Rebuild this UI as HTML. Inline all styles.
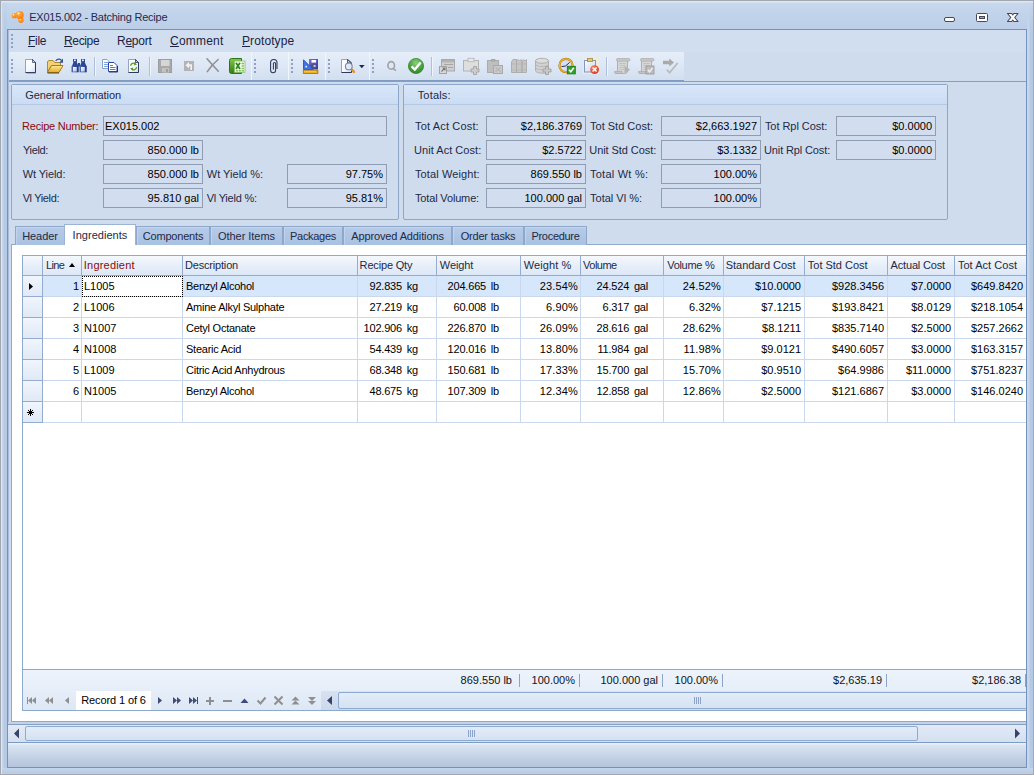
<!DOCTYPE html>
<html>
<head>
<meta charset="utf-8">
<title>EX015.002 - Batching Recipe</title>
<style>
*{box-sizing:border-box;margin:0;padding:0}
html,body{width:1034px;height:775px;overflow:hidden;background:#bfd2ea}
body{font-family:"Liberation Sans",sans-serif;font-size:11px;color:#10131a;position:relative;letter-spacing:-0.15px}
.a{position:absolute}
.t{position:absolute;white-space:nowrap;line-height:14px}
svg{display:block;overflow:visible}
/* window frame */
#frame{left:0;top:0;width:1034px;height:775px;background:linear-gradient(#dde8f5 0,#dde8f5 1px,#c7d8ed 2px,#c1d3ea 14px,#bccfe8 28px,#bccfe8 100%);border:1px solid #a3a8b0}
#frameL{left:1px;top:1px;width:6px;height:773px;background:linear-gradient(90deg,#dbe6f4 0,#dbe6f4 1px,#c4d5ec 1px,#c4d5ec 2px,#b6cae5 3px,#b6cae5 100%);-webkit-mask-image:linear-gradient(180deg,transparent 0,rgba(0,0,0,.35) 14px,#000 34px);mask-image:linear-gradient(180deg,transparent 0,rgba(0,0,0,.35) 14px,#000 34px)}
#frameR{left:1027px;top:1px;width:6px;height:773px;background:linear-gradient(90deg,#c6d7ec 0,#c6d7ec 2px,#b5c9e4 3px,#b5c9e4 100%);-webkit-mask-image:linear-gradient(180deg,transparent 0,rgba(0,0,0,.35) 14px,#000 34px);mask-image:linear-gradient(180deg,transparent 0,rgba(0,0,0,.35) 14px,#000 34px)}
#frameB{left:1px;top:768px;width:1032px;height:6px;background:linear-gradient(#c3d5eb,#b7cbe6)}
#frameL2{left:1px;top:1px;width:1px;height:773px;background:#dbe6f4}
#client{left:7px;top:29px;width:1020px;height:739px;background:#cfdcee;border:1px solid #7592bd}
#title{left:29.2px;top:10px;font-size:11px;letter-spacing:-0.23px;color:#1f2a52}
/* menu */
#menubar{left:8px;top:30px;width:1018px;height:22px;background:#d0def0}
.m{top:34px;font-size:12px;letter-spacing:-0.35px;color:#1d2340}
.m u{text-decoration:underline;text-underline-offset:1px}
/* toolbar */
#toolbar{left:8px;top:52px;width:676px;height:28px;background:linear-gradient(#e6eef9,#dde7f5 50%,#d2dff0)}
#tbline{left:8px;top:80px;width:676px;height:2px;background:linear-gradient(#7f9ac1,#8aa3c8)}
#tbline2{left:684px;top:81px;width:342px;height:1px;background:#859ec5}
#cl2{left:8px;top:30px;width:1px;height:737px;background:#a9bdda}
.grip{width:2px;background-image:repeating-linear-gradient(#8ea2c2 0 2px,transparent 2px 4px)}
.tsep{position:absolute;top:57px;width:2px;height:19px;border-left:1px solid #afc0db;border-right:1px solid #f0f5fc}
/* panels */
.panel{border:1px solid #8da6ca;background:#cfdcee;border-radius:2px}
.phead{left:0;top:0;right:0;height:20px;background:linear-gradient(#d9e6f8,#cadcf4);border-bottom:1px solid #b4c8e3}
.lbl{color:#1e2a44}
.red{color:#8b0a0a}
.fld{position:absolute;height:20px;border:1px solid #8e9cb4;background:#d2deef;line-height:19px;white-space:nowrap;padding:0 3px 0 1px;color:#000;letter-spacing:0}
.r{text-align:right}
/* tabs */
.tab{letter-spacing:0.03px;position:absolute;top:226px;height:19px;border:1px solid #8ea8cc;border-bottom:none;background:linear-gradient(#b7cbe8,#a9c1e1);box-shadow:inset 1px 1px 0 rgba(255,255,255,.22);text-align:center;line-height:18px;color:#1e2a44;white-space:nowrap}
.tab.sel{top:224px;height:21px;background:#fff;box-shadow:none;border-color:#9bb3d4;line-height:20px;z-index:3}
#page{left:11px;top:244px;width:1015px;height:478px;background:#fff;border:1px solid #8fa9cc;border-right:none}
/* grid */
#grid{left:22px;top:255px;width:1004px;height:456px;border:1px solid #8fa9cc;border-right:none;background:#fff;overflow:hidden}
.gh{position:absolute;top:0;height:20px;background:linear-gradient(#f5f8fd,#e6eef9 55%,#dde8f6);border-right:1px solid #93acd0;border-bottom:1px solid #93acd0;line-height:18px;padding-left:3px;white-space:nowrap;color:#1e2a44;overflow:hidden}
.row{position:absolute;left:0;width:1004px;height:21px}
.c.d{letter-spacing:-0.25px;padding-left:3px}
.c.u{letter-spacing:-0.2px;word-spacing:2px}
.c.p{letter-spacing:0.15px}
.c{position:absolute;top:0;height:21px;border-right:1px solid #c9d8ec;border-bottom:1px solid #c9d8ec;line-height:20px;padding:0 2px;white-space:nowrap;overflow:hidden;letter-spacing:0;color:#000}
.ind{position:absolute;left:0;top:0;height:21px;background:linear-gradient(#f1f5fc,#e0e9f6);border-right:1px solid #93acd0;border-bottom:1px solid #93acd0}
.selrow .c{background:#d6e6fb}
#gfoot{left:0;top:413px;width:1004px;height:42px;border-top:1px solid #8fa9cc;background:linear-gradient(#edf3fb,#e6eef9 50%,#dde7f5)}
.sum{position:absolute;top:418px;height:13px;border-right:1px solid #8ea4c4;text-align:right;padding-right:7px;line-height:13px;white-space:nowrap;letter-spacing:0;color:#10131a}
.focus{background:#fff !important;outline:1px dotted #000;outline-offset:-1px}
.sortup{display:inline-block;width:0;height:0;border-left:3.5px solid transparent;border-right:3.5px solid transparent;border-bottom:4px solid #000;margin-left:5px;vertical-align:2px}
/* nav */
#recbox{position:absolute;background:#fff;text-align:center;line-height:19px;letter-spacing:-0.1px;color:#000}
/* scrollbars */
.thumb{position:absolute;border:1px solid #8faad0;border-radius:2px;background:linear-gradient(#e3ecf8,#d5e2f3)}
</style>
</head>
<body>
<div id="frame" class="a"></div>
<div id="frameL" class="a"></div>
<div id="frameR" class="a"></div>
<div id="frameB" class="a"></div>
<div id="frameL2" class="a"></div>
<div id="title" class="t">EX015.002 - Batching Recipe</div>
<svg class="a" style="left:940px;top:8px" width="86" height="20"><rect x="4.5" y="9.5" width="10" height="4" rx="1.5" fill="#fff" stroke="#45475c"/><rect x="36.5" y="5.5" width="11" height="8" rx="1" fill="#fff" stroke="#45475c"/><rect x="39.5" y="8.5" width="5" height="2" fill="#8fa3c4" stroke="#45475c"/><path d="M67.5 5.5h4.2l1.05 1.5l1.05-1.5h4.2l-3.3 4l3.3 4h-4.2l-1.05-1.5l-1.05 1.5h-4.2l3.3-4z" fill="#fff" stroke="#45475c" stroke-width="1.1" stroke-linejoin="round"/></svg>
<div id="client" class="a"></div>
<div id="menubar" class="a"></div>
<div class="a grip" style="left:11px;top:34px;height:15px"></div>
<div class="t m" style="left:28px;letter-spacing:-0.30px"><u>F</u>ile</div>
<div class="t m" style="left:64px;letter-spacing:-0.35px"><u>R</u>ecipe</div>
<div class="t m" style="left:117px;letter-spacing:-0.25px">R<u>e</u>port</div>
<div class="t m" style="left:170px;letter-spacing:0.20px"><u>C</u>omment</div>
<div class="t m" style="left:242px;letter-spacing:0.10px"><u>P</u>rototype</div>
<div id="toolbar" class="a"></div>
<div id="tbline" class="a"></div><div id="tbline2" class="a"></div><div id="cl2" class="a"></div>
<div class="a grip" style="left:11px;top:59px;height:15px"></div>
<div class="a" style="left:251px;top:52px;width:1px;height:28px;background:#f1f5fc"></div>
<div class="a" style="left:288px;top:52px;width:1px;height:28px;background:#f1f5fc"></div>
<div class="a" style="left:325px;top:52px;width:1px;height:28px;background:#f1f5fc"></div>
<div class="a" style="left:369px;top:52px;width:1px;height:28px;background:#f1f5fc"></div>
<div class="a grip" style="left:254px;top:59px;height:15px"></div>
<div class="a grip" style="left:291px;top:59px;height:15px"></div>
<div class="a grip" style="left:328px;top:59px;height:15px"></div>
<div class="a grip" style="left:372px;top:59px;height:15px"></div>
<div class="tsep" style="left:94px"></div>
<div class="tsep" style="left:149px"></div>
<div class="tsep" style="left:431px"></div>
<div class="tsep" style="left:606px"></div>
<svg class="a" style="left:8px;top:6px" width="676" height="74" viewBox="8 6 676 74">
<defs>
<radialGradient id="og" cx="35%" cy="30%" r="75%"><stop offset="0" stop-color="#fff3d8"/><stop offset="0.3" stop-color="#ffa53a"/><stop offset="1" stop-color="#f97800"/></radialGradient>
<linearGradient id="pg" x1="0" y1="0" x2="1" y2="1"><stop offset="0" stop-color="#ffffff"/><stop offset="0.6" stop-color="#f4f7fc"/><stop offset="1" stop-color="#cfd9ec"/></linearGradient>
<linearGradient id="fg" x1="0" y1="0" x2="0" y2="1"><stop offset="0" stop-color="#fde894"/><stop offset="1" stop-color="#eaa92a"/></linearGradient>
<linearGradient id="bn" x1="0" y1="0" x2="1" y2="0"><stop offset="0" stop-color="#4a6cc0"/><stop offset="1" stop-color="#1e3478"/></linearGradient>
<linearGradient id="ln" x1="0" y1="0" x2="1" y2="1"><stop offset="0" stop-color="#ffffff"/><stop offset="1" stop-color="#a9bbe8"/></linearGradient>
<linearGradient id="xg" x1="0" y1="0" x2="0" y2="1"><stop offset="0" stop-color="#86c74c"/><stop offset="1" stop-color="#2f7d12"/></linearGradient>
<radialGradient id="gc" cx="50%" cy="30%" r="75%"><stop offset="0" stop-color="#8fd07e"/><stop offset="0.6" stop-color="#47a03c"/><stop offset="1" stop-color="#2a7d27"/></radialGradient>
<linearGradient id="fl" x1="0" y1="0" x2="1" y2="1"><stop offset="0" stop-color="#7a6fd6"/><stop offset="1" stop-color="#3a3690"/></linearGradient>
<radialGradient id="rc" cx="40%" cy="35%" r="70%"><stop offset="0" stop-color="#ff8a6a"/><stop offset="1" stop-color="#d9301a"/></radialGradient>
<linearGradient id="cb" x1="0" y1="0" x2="1" y2="1"><stop offset="0" stop-color="#ffffff"/><stop offset="1" stop-color="#c3d3ef"/></linearGradient>
</defs>
<!-- title icon -->
<circle cx="14.3" cy="15.7" r="2.6" fill="url(#og)"/><circle cx="20.9" cy="20.1" r="2.8" fill="url(#og)"/><circle cx="19.7" cy="14.9" r="4" fill="url(#og)"/>
<!-- 1 new -->
<path d="M25.5 59.5H32.5L35.5 62.5V72.5H25.5Z" fill="url(#pg)" stroke="#97a4bf"/><path d="M32.5 59.5L35.5 62.5V72.5H25.5" fill="none" stroke="#2c3a5e" stroke-width="1"/><path d="M32.5 59.5V62.5H35.5Z" fill="#d3dbea" stroke="#2c3a5e" stroke-width="0.7"/><path d="M26.5 73.3H36" stroke="#6b7898" stroke-width="0.6"/>
<!-- 2 open -->
<path d="M47.5 72.5V61.5L49 60.5H53L54.5 62.5H60.5V66H51Z" fill="#f1d276" stroke="#b08a34"/><path d="M47.5 72.5L51.5 65.5H63L59 72.5Z" fill="url(#fg)" stroke="#a67c22"/><path d="M47.5 73H59" stroke="#5a4a20" stroke-width="1"/>
<path d="M55.6 61Q58.6 57.6 61.6 60.4" fill="none" stroke="#36508e" stroke-width="1.1"/><path d="M63 58.6V62.8H59.2Z" fill="#36508e"/>
<!-- 3 binoculars -->
<g><rect x="73" y="59" width="4" height="3.2" fill="#2f4fa2"/><rect x="74" y="59.5" width="1.8" height="1.6" fill="#e3ebfb"/><path d="M72 66L73.6 62H76.6L78.5 66Z" fill="#2b4896"/><rect x="71.5" y="66" width="7.2" height="6.3" fill="url(#bn)"/><rect x="73" y="67" width="3.8" height="4.6" fill="url(#ln)"/></g>
<g transform="translate(8,0)"><rect x="73" y="59" width="4" height="3.2" fill="#2f4fa2"/><rect x="74" y="59.5" width="1.8" height="1.6" fill="#e3ebfb"/><path d="M72 66L73.6 62H76.6L78.5 66Z" fill="#2b4896"/><rect x="71.5" y="66" width="7.2" height="6.3" fill="url(#bn)"/><rect x="73" y="67" width="3.8" height="4.6" fill="url(#ln)"/></g><rect x="78" y="63" width="2" height="3.5" fill="#2b4896"/>
<!-- 4 copy -->
<path d="M102.5 59.5H107L109.5 62V68.5H102.5Z" fill="#fff" stroke="#8fa1c6"/><path d="M104 62.5H108M104 64.5H108M104 66.5H108" stroke="#6c9ce2" stroke-width="0.9"/>
<path d="M108.5 62.5H114L117 65.5V71.5H108.5Z" fill="#fff" stroke="#2b47a0"/><path d="M110 65.5H113M110 67.5H115.5M110 69.5H115.5" stroke="#4a80d8"/><path d="M109 72H117.5V66" fill="none" stroke="#1f3788"/>
<!-- 5 refresh doc -->
<path d="M128.5 59.5H135.5L138.5 62.5V72.5H128.5Z" fill="url(#pg)" stroke="#97a4bf"/><path d="M135.5 59.5L138.5 62.5V72.5H128.5" fill="none" stroke="#2c3a5e"/><path d="M135.5 59.5V62.5H138.5Z" fill="#c5cfe3" stroke="#2c3a5e" stroke-width="0.8"/>
<path d="M130.6 65.8A3 3 0 0 1 135.6 64" fill="none" stroke="#5a9c1c" stroke-width="1.2"/><path d="M134.6 62.2L137 64.6L134 65.6Z" fill="#5a9c1c"/>
<path d="M136.6 67.2A3 3 0 0 1 131.6 69" fill="none" stroke="#5a9c1c" stroke-width="1.2"/><path d="M132.6 70.8L130.2 68.4L133.2 67.4Z" fill="#5a9c1c"/>
<!-- 6 save gray -->
<rect x="158.5" y="59.5" width="13" height="13" fill="#a9a9a9" stroke="#9d9d9d"/><rect x="161" y="60" width="8.5" height="6" fill="#d6d6d6"/><rect x="162" y="68" width="7" height="4.5" fill="#c2c2c2"/><rect x="166" y="69" width="2" height="3" fill="#a0a0a0"/>
<!-- 7 undo gray -->
<rect x="184" y="61" width="10" height="10" fill="#b3b3b3"/><path d="M185.5 65.2L189 62V64.2H192V70H190.4V66.2H189V68.4Z" fill="#f2f2f2"/>
<!-- 8 X gray -->
<path d="M207 58.8Q212 64.5 218.3 71.3M218.2 59.5Q212 64.5 207.3 71.6" fill="none" stroke="#8f8f8f" stroke-width="1.5" stroke-linecap="round"/>
<!-- 9 excel -->
<path d="M229.5 60.5Q229.5 58.5 231.5 58.5H241.5V73.5H231.5Q229.5 73.5 229.5 71.5Z" fill="url(#xg)" stroke="#2f7414"/>
<rect x="234.5" y="61" width="10.5" height="11.3" fill="#f2f9ec" stroke="#86bf68" stroke-width="0.8"/>
<path d="M236 62.8L240 69M240 62.8L236 69" stroke="#2e8818" stroke-width="1.7"/><path d="M241.6 63.5h2.4M241.6 66h2.4M241.6 68.5h2.4M236 70.8h2M238.8 70.8h2M241.6 70.8h2.4" stroke="#86c462" stroke-width="1.4"/>
<!-- 10 paperclip -->
<path d="M277 69V62.6A3.2 3.2 0 0 0 270.6 62.6V70.3A2.5 2.5 0 0 0 275.6 70.3V63.6A1.1 1.1 0 0 0 273.4 63.6V69.4" fill="none" stroke="#2b3a5c" stroke-width="1.05"/>
<!-- 11 save ruler -->
<rect x="309" y="59" width="9" height="10.5" fill="url(#fl)"/><rect x="311.5" y="60" width="4.6" height="2.6" fill="#fff"/><rect x="311" y="64.5" width="5.2" height="3.2" fill="#4d5470"/><rect x="313.6" y="65" width="2" height="2" fill="#c6cadc"/>
<path d="M303.5 59.8L313.2 69.5H303.5Z" fill="#3f74e8" stroke="#2a50ba" stroke-width="0.9"/><circle cx="306.2" cy="66.6" r="0.9" fill="#eaf1ff"/>
<rect x="303.3" y="70.3" width="14.6" height="3.2" fill="#eaab16" stroke="#a57206" stroke-width="0.8"/><path d="M305 70.6v1.6M307 70.6v1.6M309 70.6v1.6M311 70.6v1.6M313 70.6v1.6M315 70.6v1.6" stroke="#fff1b8" stroke-width="0.7"/>
<!-- 12 preview -->
<path d="M341.5 59.5H347.5L351.5 63V72.5H341.5Z" fill="url(#pg)" stroke="#97a4bf"/><path d="M347.5 59.5L351.5 63V72.5H341.5" fill="none" stroke="#2c3a5e"/><path d="M347.5 59.5V63H351.5Z" fill="#c5cfe3" stroke="#2c3a5e" stroke-width="0.8"/>
<path d="M351.3 69L354 71.8" stroke="#e8921a" stroke-width="2.4" stroke-linecap="round"/><circle cx="348.8" cy="66.4" r="3.4" fill="#dbe7fa" fill-opacity="0.95" stroke="#7f8798" stroke-width="1.1"/>
<path d="M359 65H364.6L361.8 68.2Z" fill="#1f2a4a"/>
<!-- 13 Q -->
<ellipse cx="391.2" cy="65.4" rx="3.3" ry="3.8" fill="none" stroke="#a0a0a0" stroke-width="1.6"/><path d="M392.6 68.2L396 70.6" stroke="#a0a0a0" stroke-width="1.6"/>
<!-- 14 green check -->
<circle cx="416" cy="66" r="7.6" fill="url(#gc)" stroke="#3a8c30" stroke-width="0.8"/><path d="M411.6 66.4L414.8 69.6L420.6 62.6" fill="none" stroke="#fff" stroke-width="2.3"/>
<!-- 15 form shortcut gray -->
<rect x="441.5" y="59.5" width="13" height="11.5" fill="#cfcfcf" stroke="#a9a9a9"/><rect x="442" y="60" width="12" height="2.4" fill="#b3b3b3"/><path d="M444 64.5H453M448 67.5H453" stroke="#a6a6a6" stroke-width="1.2"/>
<rect x="439.5" y="66.5" width="7" height="7" fill="#d8d8d8" stroke="#a2a2a2"/><path d="M441.5 71.5L444.8 68.2M442.4 68H445V70.6" fill="none" stroke="#767676" stroke-width="1.1"/>
<!-- 16 clipboard plus gray -->
<rect x="463.5" y="60.5" width="15" height="10.5" fill="#dedede" stroke="#b4b4b4"/><rect x="468" y="58.3" width="6" height="3.4" fill="#e9e9e9" stroke="#b4b4b4" stroke-width="0.8"/>
<path d="M473.5 66.5h3v2.5h2.5v3h-2.5v2.5h-3v-2.5h-2.5v-3h2.5z" fill="#cdcdcd" stroke="#a4a4a4" stroke-width="0.9"/>
<!-- 17 paste gray -->
<rect x="487.5" y="60.5" width="11" height="12" fill="#bebebe" stroke="#ababab"/><rect x="491" y="59" width="4.4" height="2.6" fill="#a9a9a9"/><rect x="493.5" y="65.5" width="9" height="8" fill="#c9c9c9" stroke="#a8a8a8"/><path d="M495.5 67.5L500.5 71.5M500.5 67.5L495.5 71.5" stroke="#b5b5b5" stroke-width="1.2"/>
<!-- 18 books gray -->
<path d="M511.5 62L513 59.5H516.5V72.5H511.5Z M516.5 61.5L518 59.5L519.5 61L521 59.5L522 61.5V72.5H516.5Z M522 61.5L523.5 59.5L525 61L526.5 59.5V72.5H522Z" fill="#c6c6c6" stroke="#aaaaaa" stroke-width="0.9"/><path d="M512 64H526M512 70H526" stroke="#b4b4b4" stroke-width="0.8"/>
<!-- 19 db plus gray -->
<path d="M535.5 60.8V70.6A6.5 2.6 0 0 0 548.5 70.6V60.8" fill="#d2d2d2" stroke="#b0b0b0"/><ellipse cx="542" cy="60.8" rx="6.5" ry="2.5" fill="#dcdcdc" stroke="#b0b0b0"/><path d="M535.5 64.2A6.5 2.4 0 0 0 548.5 64.2M535.5 67.4A6.5 2.4 0 0 0 548.5 67.4" fill="none" stroke="#b8b8b8"/>
<path d="M545.5 66.5h3v2.5h2.5v3h-2.5v2.5h-3v-2.5h-2.5v-3h2.5z" fill="#c6c6c6" stroke="#a2a2a2" stroke-width="0.9"/>
<!-- 20 clock check -->
<circle cx="566" cy="65.5" r="6.6" fill="#d9dcfb" stroke="#b07e12" stroke-width="2.2"/><circle cx="566" cy="65.5" r="6.6" fill="none" stroke="#e9b92c" stroke-width="1.2"/><path d="M561.6 66.6L565.6 66L569.6 62.4" fill="none" stroke="#2e2e3a" stroke-width="1"/>
<rect x="567.3" y="66.3" width="8" height="7.6" fill="#2fa22a" stroke="#187414" stroke-width="0.8"/><path d="M569 69.8L570.8 71.8L573.8 67.8" fill="none" stroke="#fff" stroke-width="1.5"/>
<!-- 21 clipboard red x -->
<rect x="583" y="58" width="16" height="16" fill="#efebdf"/><rect x="584.5" y="60.5" width="11" height="11.5" fill="url(#cb)" stroke="#8398c0"/><rect x="587.5" y="58.4" width="5" height="3.2" fill="#e4cb6e" stroke="#a58c36" stroke-width="0.8"/>
<circle cx="594.6" cy="69.6" r="4.4" fill="url(#rc)"/><path d="M592.6 67.6L596.6 71.6M596.6 67.6L592.6 71.6" stroke="#fff" stroke-width="1.4"/>
<!-- 22 script play gray -->
<g><path d="M617.5 60V71Q617.5 73.5 615 73.5H624.5Q627.5 73.5 627.5 71V60Z" fill="#d6d6d6" stroke="#b0b0b0"/><rect x="616.5" y="58.5" width="13.5" height="2.6" rx="1.3" fill="#c8c8c8" stroke="#b0b0b0" stroke-width="0.8"/><path d="M614.5 71.5H622V73.5H615.5Q614.3 73.2 614.5 71.5Z" fill="#c4c4c4" stroke="#adadad" stroke-width="0.8"/><path d="M619.5 63.5H625.5M619.5 65.5H625.5M619.5 67.5H624M619.5 69.5H624" stroke="#bdbdbd" stroke-width="0.8"/></g>
<path d="M624.5 65.8L630.2 69.7L624.5 73.6Z" fill="#b3b3b3"/>
<!-- 23 script check gray -->
<g transform="translate(24,0)"><path d="M617.5 60V71Q617.5 73.5 615 73.5H624.5Q627.5 73.5 627.5 71V60Z" fill="#d6d6d6" stroke="#b0b0b0"/><rect x="616.5" y="58.5" width="13.5" height="2.6" rx="1.3" fill="#c8c8c8" stroke="#b0b0b0" stroke-width="0.8"/><path d="M614.5 71.5H622V73.5H615.5Q614.3 73.2 614.5 71.5Z" fill="#c4c4c4" stroke="#adadad" stroke-width="0.8"/><path d="M619.5 63.5H625.5M619.5 65.5H625.5M619.5 67.5H624M619.5 69.5H624" stroke="#bdbdbd" stroke-width="0.8"/></g><rect x="646" y="66" width="8" height="8" fill="#bdbdbd" stroke="#9c9c9c" stroke-width="0.9"/><path d="M647.8 69.8L649.6 71.8L652.6 67.8" fill="none" stroke="#f0f0f0" stroke-width="1.4"/>
<!-- 24 arrow check gray -->
<path d="M663 60.8H669.2V58.4L674 62.4L669.2 66.6V64.2H663Z" fill="#aaaaaa"/><path d="M666.8 69.6L669.6 72.8L677.6 63" fill="none" stroke="#b9b9b9" stroke-width="1.7"/>
</svg>
<div class="a panel" style="left:11px;top:84px;width:388px;height:136px"><div class="a phead"></div></div>
<div class="t lbl" style="left:25.28px;top:88px;letter-spacing:-0.078px">General Information</div>
<div class="t red" style="left:22.10px;top:119px;letter-spacing:-0.232px">Recipe Number:</div>
<div class="fld" style="left:103px;top:116px;width:284px">EX015.002</div>
<div class="t lbl" style="left:23.00px;top:143px;letter-spacing:-0.339px">Yield:</div>
<div class="fld r" style="left:103px;top:140px;width:100px">850.000 lb</div>
<div class="t lbl" style="left:22.72px;top:167px;letter-spacing:-0.086px">Wt Yield:</div>
<div class="fld r" style="left:103px;top:164px;width:100px">850.000 lb</div>
<div class="t lbl" style="left:206.74px;top:167px;letter-spacing:0.020px">Wt Yield %:</div>
<div class="fld r" style="left:287px;top:164px;width:100px">97.75%</div>
<div class="t lbl" style="left:22.67px;top:191px;letter-spacing:-0.371px">Vl Yield:</div>
<div class="fld r" style="left:103px;top:188px;width:100px">95.810 gal</div>
<div class="t lbl" style="left:206.71px;top:191px;letter-spacing:-0.226px">Vl Yield %:</div>
<div class="fld r" style="left:287px;top:188px;width:100px">95.81%</div>
<div class="a panel" style="left:403px;top:84px;width:545px;height:136px"><div class="a phead"></div></div>
<div class="t lbl" style="left:417.70px;top:88px;letter-spacing:0.179px">Totals:</div>
<div class="t lbl" style="left:415.00px;top:119px;letter-spacing:0.160px">Tot Act Cost:</div>
<div class="fld r" style="left:486px;top:116px;width:100px">$2,186.3769</div>
<div class="t lbl" style="left:590.01px;top:119px;letter-spacing:0.008px">Tot Std Cost:</div>
<div class="fld r" style="left:661px;top:116px;width:100px">$2,663.1927</div>
<div class="t lbl" style="left:764.90px;top:119px;letter-spacing:-0.039px">Tot Rpl Cost:</div>
<div class="fld r" style="left:836px;top:116px;width:100px">$0.0000</div>
<div class="t lbl" style="left:414.02px;top:143px;letter-spacing:0.044px">Unit Act Cost:</div>
<div class="fld r" style="left:486px;top:140px;width:100px">$2.5722</div>
<div class="t lbl" style="left:589.32px;top:143px;letter-spacing:-0.076px">Unit Std Cost:</div>
<div class="fld r" style="left:661px;top:140px;width:100px">$3.1332</div>
<div class="t lbl" style="left:764.06px;top:143px;letter-spacing:-0.132px">Unit Rpl Cost:</div>
<div class="fld r" style="left:836px;top:140px;width:100px">$0.0000</div>
<div class="t lbl" style="left:415.03px;top:167px;letter-spacing:0.099px">Total Weight:</div>
<div class="fld r" style="left:486px;top:164px;width:100px">869.550 lb</div>
<div class="t lbl" style="left:590.01px;top:167px;letter-spacing:0.239px">Total Wt %:</div>
<div class="fld r" style="left:661px;top:164px;width:100px">100.00%</div>
<div class="t lbl" style="left:415.01px;top:191px;letter-spacing:-0.158px">Total Volume:</div>
<div class="fld r" style="left:486px;top:188px;width:100px">100.000 gal</div>
<div class="t lbl" style="left:590.03px;top:191px;letter-spacing:0.006px">Total Vl %:</div>
<div class="fld r" style="left:661px;top:188px;width:100px">100.00%</div>
<div id="page" class="a"></div>
<div class="tab" style="left:15px;width:50px;letter-spacing:-0.10px">Header</div>
<div class="tab sel" style="left:64px;width:72px;letter-spacing:0.03px">Ingredients</div>
<div class="tab" style="left:136px;width:74px;letter-spacing:-0.20px">Components</div>
<div class="tab" style="left:210px;width:73px;letter-spacing:-0.03px">Other Items</div>
<div class="tab" style="left:283px;width:60px;letter-spacing:-0.30px">Packages</div>
<div class="tab" style="left:343px;width:109px;letter-spacing:-0.12px">Approved Additions</div>
<div class="tab" style="left:452px;width:72px;letter-spacing:-0.20px">Order tasks</div>
<div class="tab" style="left:524px;width:63px;letter-spacing:-0.30px">Procedure</div>
<div id="grid" class="a">
<div class="gh" style="left:0;width:20px"></div>
<div class="gh" style="left:20px;width:39px;letter-spacing:-0.650px;padding-left:3.00px">Line<span class="sortup"></span></div>
<div class="gh" style="left:59px;width:101px;color:#8b0a0a;letter-spacing:0.197px;padding-left:1.86px">Ingredient</div>
<div class="gh" style="left:160px;width:175px;letter-spacing:-0.178px;padding-left:1.96px">Description</div>
<div class="gh" style="left:335px;width:79px;letter-spacing:-0.170px;padding-left:1.62px">Recipe Qty</div>
<div class="gh" style="left:414px;width:84px;letter-spacing:-0.117px;padding-left:2.86px">Weight</div>
<div class="gh" style="left:498px;width:60px;letter-spacing:0.098px;padding-left:2.84px">Weight %</div>
<div class="gh" style="left:558px;width:83px;letter-spacing:-0.508px;padding-left:2.09px">Volume</div>
<div class="gh" style="left:641px;width:60px;letter-spacing:-0.289px;padding-left:3.19px">Volume %</div>
<div class="gh" style="left:701px;width:81px;letter-spacing:-0.046px;padding-left:1.78px">Standard Cost</div>
<div class="gh" style="left:782px;width:83px;letter-spacing:-0.018px;padding-left:2.82px">Tot Std Cost</div>
<div class="gh" style="left:865px;width:67px;letter-spacing:-0.167px;padding-left:2.59px">Actual Cost</div>
<div class="gh" style="left:932px;width:73px;letter-spacing:0.031px;padding-left:2.95px">Tot Act Cost</div>
<div class="row selrow" style="top:20px"><div class="ind" style="width:20px"><svg class="a" style="left:0;top:0" width="20" height="21"><path d="M6 7 L10 10.5 L6 14 Z" fill="#000"/></svg></div><div class="c" style="left:20px;width:39px;text-align:right;padding-right:2px">1</div><div class="c focus" style="left:59px;width:101px">L1005</div><div class="c d" style="left:160px;width:175px">Benzyl Alcohol</div><div class="c u" style="left:335px;width:79px;text-align:right;padding-right:18px">92.835 kg</div><div class="c u" style="left:414px;width:84px;text-align:right;padding-right:21px">204.665 lb</div><div class="c p" style="left:498px;width:60px;text-align:right;padding-right:2px">23.54%</div><div class="c u" style="left:558px;width:83px;text-align:right;padding-right:15px">24.524 gal</div><div class="c p" style="left:641px;width:60px;text-align:right;padding-right:2px">24.52%</div><div class="c" style="left:701px;width:81px;text-align:right;padding-right:3px">$10.0000</div><div class="c" style="left:782px;width:83px;text-align:right;padding-right:3px">$928.3456</div><div class="c" style="left:865px;width:67px;text-align:right;padding-right:3px">$7.0000</div><div class="c" style="left:932px;width:73px;text-align:right;padding-right:4px">$649.8420</div></div>
<div class="row" style="top:41px"><div class="ind" style="width:20px"></div><div class="c" style="left:20px;width:39px;text-align:right;padding-right:2px">2</div><div class="c" style="left:59px;width:101px">L1006</div><div class="c d" style="left:160px;width:175px">Amine Alkyl Sulphate</div><div class="c u" style="left:335px;width:79px;text-align:right;padding-right:18px">27.219 kg</div><div class="c u" style="left:414px;width:84px;text-align:right;padding-right:21px">60.008 lb</div><div class="c p" style="left:498px;width:60px;text-align:right;padding-right:2px">6.90%</div><div class="c u" style="left:558px;width:83px;text-align:right;padding-right:15px">6.317 gal</div><div class="c p" style="left:641px;width:60px;text-align:right;padding-right:2px">6.32%</div><div class="c" style="left:701px;width:81px;text-align:right;padding-right:3px">$7.1215</div><div class="c" style="left:782px;width:83px;text-align:right;padding-right:3px">$193.8421</div><div class="c" style="left:865px;width:67px;text-align:right;padding-right:3px">$8.0129</div><div class="c" style="left:932px;width:73px;text-align:right;padding-right:4px">$218.1054</div></div>
<div class="row" style="top:62px"><div class="ind" style="width:20px"></div><div class="c" style="left:20px;width:39px;text-align:right;padding-right:2px">3</div><div class="c" style="left:59px;width:101px">N1007</div><div class="c d" style="left:160px;width:175px">Cetyl Octanate</div><div class="c u" style="left:335px;width:79px;text-align:right;padding-right:18px">102.906 kg</div><div class="c u" style="left:414px;width:84px;text-align:right;padding-right:21px">226.870 lb</div><div class="c p" style="left:498px;width:60px;text-align:right;padding-right:2px">26.09%</div><div class="c u" style="left:558px;width:83px;text-align:right;padding-right:15px">28.616 gal</div><div class="c p" style="left:641px;width:60px;text-align:right;padding-right:2px">28.62%</div><div class="c" style="left:701px;width:81px;text-align:right;padding-right:3px">$8.1211</div><div class="c" style="left:782px;width:83px;text-align:right;padding-right:3px">$835.7140</div><div class="c" style="left:865px;width:67px;text-align:right;padding-right:3px">$2.5000</div><div class="c" style="left:932px;width:73px;text-align:right;padding-right:4px">$257.2662</div></div>
<div class="row" style="top:83px"><div class="ind" style="width:20px"></div><div class="c" style="left:20px;width:39px;text-align:right;padding-right:2px">4</div><div class="c" style="left:59px;width:101px">N1008</div><div class="c d" style="left:160px;width:175px">Stearic Acid</div><div class="c u" style="left:335px;width:79px;text-align:right;padding-right:18px">54.439 kg</div><div class="c u" style="left:414px;width:84px;text-align:right;padding-right:21px">120.016 lb</div><div class="c p" style="left:498px;width:60px;text-align:right;padding-right:2px">13.80%</div><div class="c u" style="left:558px;width:83px;text-align:right;padding-right:15px">11.984 gal</div><div class="c p" style="left:641px;width:60px;text-align:right;padding-right:2px">11.98%</div><div class="c" style="left:701px;width:81px;text-align:right;padding-right:3px">$9.0121</div><div class="c" style="left:782px;width:83px;text-align:right;padding-right:3px">$490.6057</div><div class="c" style="left:865px;width:67px;text-align:right;padding-right:3px">$3.0000</div><div class="c" style="left:932px;width:73px;text-align:right;padding-right:4px">$163.3157</div></div>
<div class="row" style="top:104px"><div class="ind" style="width:20px"></div><div class="c" style="left:20px;width:39px;text-align:right;padding-right:2px">5</div><div class="c" style="left:59px;width:101px">L1009</div><div class="c d" style="left:160px;width:175px">Citric Acid Anhydrous</div><div class="c u" style="left:335px;width:79px;text-align:right;padding-right:18px">68.348 kg</div><div class="c u" style="left:414px;width:84px;text-align:right;padding-right:21px">150.681 lb</div><div class="c p" style="left:498px;width:60px;text-align:right;padding-right:2px">17.33%</div><div class="c u" style="left:558px;width:83px;text-align:right;padding-right:15px">15.700 gal</div><div class="c p" style="left:641px;width:60px;text-align:right;padding-right:2px">15.70%</div><div class="c" style="left:701px;width:81px;text-align:right;padding-right:3px">$0.9510</div><div class="c" style="left:782px;width:83px;text-align:right;padding-right:3px">$64.9986</div><div class="c" style="left:865px;width:67px;text-align:right;padding-right:3px">$11.0000</div><div class="c" style="left:932px;width:73px;text-align:right;padding-right:4px">$751.8237</div></div>
<div class="row" style="top:125px"><div class="ind" style="width:20px"></div><div class="c" style="left:20px;width:39px;text-align:right;padding-right:2px">6</div><div class="c" style="left:59px;width:101px">N1005</div><div class="c d" style="left:160px;width:175px">Benzyl Alcohol</div><div class="c u" style="left:335px;width:79px;text-align:right;padding-right:18px">48.675 kg</div><div class="c u" style="left:414px;width:84px;text-align:right;padding-right:21px">107.309 lb</div><div class="c p" style="left:498px;width:60px;text-align:right;padding-right:2px">12.34%</div><div class="c u" style="left:558px;width:83px;text-align:right;padding-right:15px">12.858 gal</div><div class="c p" style="left:641px;width:60px;text-align:right;padding-right:2px">12.86%</div><div class="c" style="left:701px;width:81px;text-align:right;padding-right:3px">$2.5000</div><div class="c" style="left:782px;width:83px;text-align:right;padding-right:3px">$121.6867</div><div class="c" style="left:865px;width:67px;text-align:right;padding-right:3px">$3.0000</div><div class="c" style="left:932px;width:73px;text-align:right;padding-right:4px">$146.0240</div></div>
<div class="row" style="top:146px"><div class="ind" style="width:20px"><svg class="a" style="left:0;top:0" width="20" height="21"><path d="M7.5 7 V14 M5 8 L10 13 M10 8 L5 13 M4 10.5 H11" stroke="#000" stroke-width="1" fill="none"/></svg></div><div class="c" style="left:20px;width:39px;text-align:right;padding-right:2px"></div><div class="c" style="left:59px;width:101px"></div><div class="c d" style="left:160px;width:175px"></div><div class="c u" style="left:335px;width:79px;text-align:right;padding-right:18px"></div><div class="c u" style="left:414px;width:84px;text-align:right;padding-right:21px"></div><div class="c p" style="left:498px;width:60px;text-align:right;padding-right:2px"></div><div class="c u" style="left:558px;width:83px;text-align:right;padding-right:15px"></div><div class="c p" style="left:641px;width:60px;text-align:right;padding-right:2px"></div><div class="c" style="left:701px;width:81px;text-align:right;padding-right:3px"></div><div class="c" style="left:782px;width:83px;text-align:right;padding-right:3px"></div><div class="c" style="left:865px;width:67px;text-align:right;padding-right:3px"></div><div class="c" style="left:932px;width:73px;text-align:right;padding-right:4px"></div></div>
<div class="a" id="gfoot"></div>
<div class="sum" style="left:414px;width:83px;padding-right:7px">869.550 lb</div><div class="sum" style="left:498px;width:59px;padding-right:4px">100.00%</div><div class="sum" style="left:558px;width:82px;padding-right:4px">100.000 gal</div><div class="sum" style="left:641px;width:59px;padding-right:4px">100.00%</div><div class="sum" style="left:782px;width:82px;padding-right:4px">$2,635.19</div><div class="sum" style="left:932px;width:71px;padding-right:4px">$2,186.38</div>
<svg class="a" style="left:0;top:435px" width="1003" height="19"><rect x="4.0" y="6.0" width="1" height="7" fill="#8f8f8f"/><path d="M9.0 6.0 L5.0 9.5 L9.0 13.0 Z" fill="#8f8f8f"/><path d="M13.0 6.0 L9.0 9.5 L13.0 13.0 Z" fill="#8f8f8f"/><path d="M26.0 6.0 L22.0 9.5 L26.0 13.0 Z" fill="#8f8f8f"/><path d="M30.0 6.0 L26.0 9.5 L30.0 13.0 Z" fill="#8f8f8f"/><path d="M46.0 6.0 L42.0 9.5 L46.0 13.0 Z" fill="#8f8f8f"/><path d="M135.0 6.0 L139.0 9.5 L135.0 13.0 Z" fill="#3f4d78"/><path d="M150.0 6.0 L154.0 9.5 L150.0 13.0 Z" fill="#3f4d78"/><path d="M154.0 6.0 L158.0 9.5 L154.0 13.0 Z" fill="#3f4d78"/><path d="M166.0 6.0 L170.0 9.5 L166.0 13.0 Z" fill="#3f4d78"/><path d="M170.0 6.0 L174.0 9.5 L170.0 13.0 Z" fill="#3f4d78"/><rect x="174.0" y="6.0" width="1" height="7" fill="#3f4d78"/><path d="M183.0 10.0 h8 M187.0 6.0 v8" stroke="#8f8f8f" stroke-width="2" fill="none"/><path d="M200.0 10.0 h9" stroke="#8f8f8f" stroke-width="2" fill="none"/><path d="M217.5 12.0 L221.5 7.5 L225.5 12.0 Z" fill="#3f4d78"/><path d="M234.5 9.5 L237.5 12.5 L242.5 6.5" stroke="#8f8f8f" stroke-width="2" fill="none"/><path d="M251.5 5.5 l8 8 M259.5 5.5 l-8 8" stroke="#8f8f8f" stroke-width="2" fill="none"/><path d="M268.5 9.5 L272.5 5.5 L276.5 9.5 Z" fill="#8f8f8f"/><path d="M268.5 13.5 L272.5 9.5 L276.5 13.5 Z" fill="#8f8f8f"/><path d="M285.0 6.0 L289.0 10.0 L293.0 6.0 Z" fill="#8f8f8f"/><path d="M285.0 10.0 L289.0 14.0 L293.0 10.0 Z" fill="#8f8f8f"/></svg>
<div id="recbox" style="left:53px;top:435px;width:75px;height:19px">Record 1 of 6</div>
<div class="a" style="left:298px;top:435px;width:706px;height:19px;background:linear-gradient(#d6e1f1,#ccd9ec)"></div>
<svg class="a" style="left:298px;top:435px" width="20" height="19"><path d="M11 5 L6 9.5 L11 14 Z" fill="#36436b"/></svg>
<div class="thumb" style="left:315px;top:436px;width:720px;height:17px"></div>
<div class="a" style="left:671px;top:441px;width:7px;height:7px;background:repeating-linear-gradient(90deg,#8ba3c9 0 1px,transparent 1px 2px)"></div>
</div>
<div class="a" style="left:8px;top:722px;width:1018px;height:2px;background:#c5d2e5"></div>
<div class="a" style="left:8px;top:724px;width:1018px;height:18px;background:linear-gradient(#e2eaf6,#d5e0f0);border-top:1px solid #859ec4"></div>
<svg class="a" style="left:8px;top:724px" width="18" height="18"><path d="M11 4.5 L6 9.5 L11 14.5 Z" fill="#36436b"/></svg>
<svg class="a" style="left:1008px;top:724px" width="18" height="18"><path d="M7 4.5 L12 9.5 L7 14.5 Z" fill="#36436b"/></svg>
<div class="thumb" style="left:25px;top:726px;width:893px;height:15px"></div>
<div class="a" style="left:468px;top:730px;width:7px;height:7px;background:repeating-linear-gradient(90deg,#8ba3c9 0 1px,transparent 1px 2px)"></div>
<div class="a" style="left:8px;top:742px;width:1018px;height:25px;border-top:1px solid #7d9bc5;background:linear-gradient(#e9f0fa 0,#e9f0fa 1px,#dbe5f2 2px,#c8d5e8 50%,#b4c4da 100%)"></div>
</body>
</html>
